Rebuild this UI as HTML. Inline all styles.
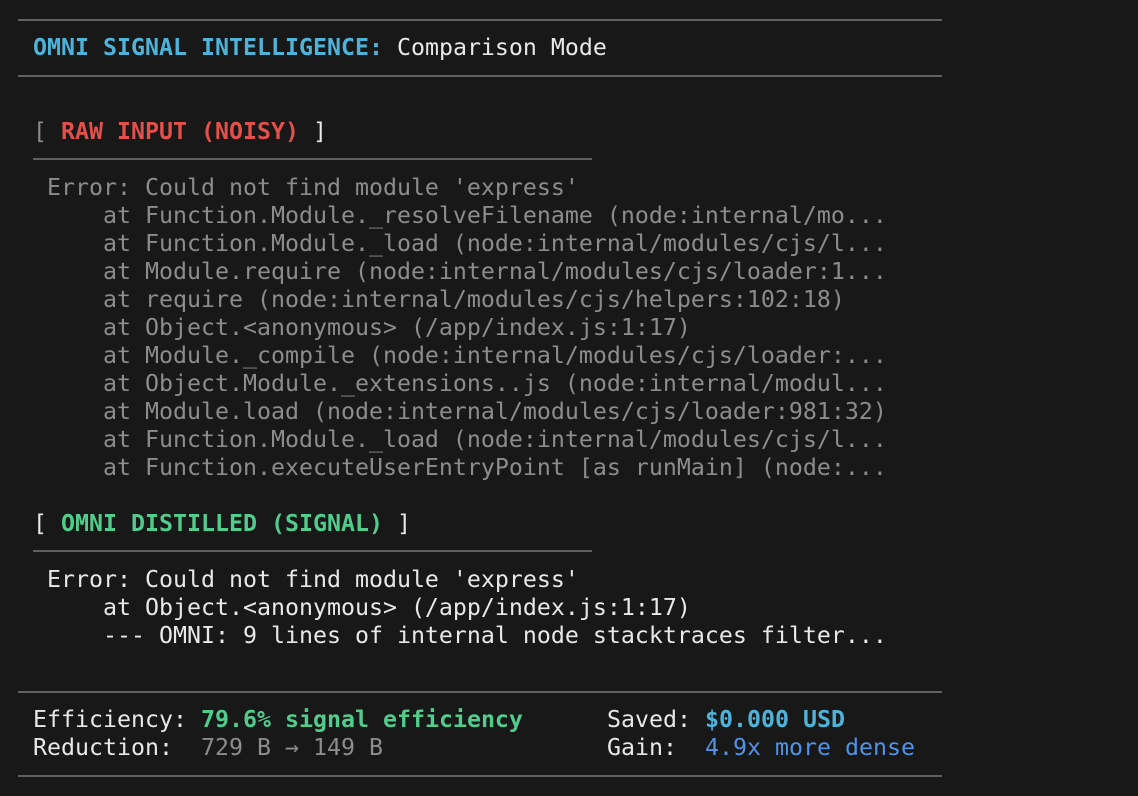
<!DOCTYPE html>
<html><head><meta charset="utf-8"><style>
html,body{margin:0;padding:0;background:#181818;width:1138px;height:796px;overflow:hidden}
body{position:relative;font-family:"DejaVu Sans Mono","Liberation Mono",monospace;font-size:23.25px;color:#e8e8e8}
.l{position:absolute;height:28px;line-height:28px;white-space:pre}
.hr{position:absolute;height:2px;background:#5f5f5f}
.g{color:#8c8c8c}.c{color:#4fb3d9;font-weight:bold}.r{color:#e2504b;font-weight:bold}.gr{color:#52cc8c;font-weight:bold}.b{color:#5292e6}
</style></head><body>
<div class="hr" style="left:18px;top:19px;width:924px"></div>
<div class="l" style="left:33px;top:34px"><span class="c">OMNI SIGNAL INTELLIGENCE:</span> Comparison Mode</div>
<div class="hr" style="left:18px;top:75px;width:924px"></div>
<div class="l" style="left:33px;top:118px"><span class="g">[</span> <span class="r">RAW INPUT (NOISY)</span> <span>]</span></div>
<div class="hr" style="left:33px;top:158px;width:559px"></div>
<div class="l g" style="left:47px;top:174px">Error: Could not find module 'express'
    at Function.Module._resolveFilename (node:internal/mo...
    at Function.Module._load (node:internal/modules/cjs/l...
    at Module.require (node:internal/modules/cjs/loader:1...
    at require (node:internal/modules/cjs/helpers:102:18)
    at Object.&lt;anonymous&gt; (/app/index.js:1:17)
    at Module._compile (node:internal/modules/cjs/loader:...
    at Object.Module._extensions..js (node:internal/modul...
    at Module.load (node:internal/modules/cjs/loader:981:32)
    at Function.Module._load (node:internal/modules/cjs/l...
    at Function.executeUserEntryPoint [as runMain] (node:...</div>
<div class="l" style="left:33px;top:510px">[ <span class="gr">OMNI DISTILLED (SIGNAL)</span> ]</div>
<div class="hr" style="left:33px;top:550px;width:559px"></div>
<div class="l" style="left:47px;top:566px">Error: Could not find module 'express'
    at Object.&lt;anonymous&gt; (/app/index.js:1:17)
    --- OMNI: 9 lines of internal node stacktraces filter...</div>
<div class="hr" style="left:18px;top:691px;width:924px"></div>
<div class="l" style="left:33px;top:706px">Efficiency: <span class="gr">79.6% signal efficiency</span>
Reduction:  <span class="g">729 B → 149 B</span></div>
<div class="l" style="left:607px;top:706px">Saved: <span class="c">$0.000 USD</span>
Gain:  <span class="b">4.9x more dense</span></div>
<div class="hr" style="left:18px;top:775px;width:924px"></div>
</body></html>
